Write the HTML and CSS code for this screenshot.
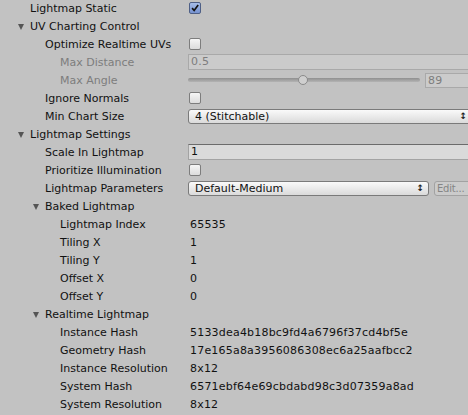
FILE: index.html
```html
<!DOCTYPE html>
<html>
<head>
<meta charset="utf-8">
<link rel="stylesheet" href="styles.css">
</head>
<body>
<div class="inspector">
  <div class="row"><div class="label l1">Lightmap Static</div><div class="value"><span class="check on"><svg viewBox="0 0 12 12" width="12" height="12"><path d="M2.5 6.2 L5 9 L9.8 2.3" fill="none" stroke="#111" stroke-width="2"/></svg></span></div></div>
  <div class="row"><div class="label l1 fold"><span class="tri"></span>UV Charting Control</div></div>
  <div class="row"><div class="label l2">Optimize Realtime UVs</div><div class="value"><span class="check"></span></div></div>
  <div class="row"><div class="label l3 dim">Max Distance</div><div class="value"><div class="field disabled">0.5</div></div></div>
  <div class="row"><div class="label l3 dim">Max Angle</div><div class="value slider-row"><div class="slider"><div class="track"></div><div class="thumb"></div></div><div class="field disabled num">89</div></div></div>
  <div class="row"><div class="label l2">Ignore Normals</div><div class="value"><span class="check"></span></div></div>
  <div class="row"><div class="label l2">Min Chart Size</div><div class="value"><div class="popup full">4 (Stitchable)<span class="arrows">&#8597;</span></div></div></div>
  <div class="row"><div class="label l1 fold"><span class="tri"></span>Lightmap Settings</div></div>
  <div class="row"><div class="label l2">Scale In Lightmap</div><div class="value"><div class="field">1</div></div></div>
  <div class="row"><div class="label l2">Prioritize Illumination</div><div class="value"><span class="check"></span></div></div>
  <div class="row"><div class="label l2">Lightmap Parameters</div><div class="value param-row"><div class="popup">Default-Medium<span class="arrows">&#8597;</span></div><div class="button disabled">Edit...</div></div></div>
  <div class="row"><div class="label l2 fold"><span class="tri"></span>Baked Lightmap</div></div>
  <div class="row"><div class="label l3">Lightmap Index</div><div class="value text">65535</div></div>
  <div class="row"><div class="label l3">Tiling X</div><div class="value text">1</div></div>
  <div class="row"><div class="label l3">Tiling Y</div><div class="value text">1</div></div>
  <div class="row"><div class="label l3">Offset X</div><div class="value text">0</div></div>
  <div class="row"><div class="label l3">Offset Y</div><div class="value text">0</div></div>
  <div class="row"><div class="label l2 fold"><span class="tri"></span>Realtime Lightmap</div></div>
  <div class="row"><div class="label l3">Instance Hash</div><div class="value text">5133dea4b18bc9fd4a6796f37cd4bf5e</div></div>
  <div class="row"><div class="label l3">Geometry Hash</div><div class="value text">17e165a8a3956086308ec6a25aafbcc2</div></div>
  <div class="row"><div class="label l3">Instance Resolution</div><div class="value text">8x12</div></div>
  <div class="row"><div class="label l3">System Hash</div><div class="value text">6571ebf64e69cbdabd98c3d07359a8ad</div></div>
  <div class="row"><div class="label l3">System Resolution</div><div class="value text">8x12</div></div>
</div>
</body>
</html>
```
FILE: styles.css
```css
html, body {
  margin: 0;
  padding: 0;
  background: #c2c2c2;
  overflow: hidden;
}
.inspector {
  width: 472px;
  display: flex;
  flex-direction: column;
  gap: 2px;
  font-family: "DejaVu Sans", Verdana, sans-serif;
  font-size: 11px;
  color: #111;
}
.row {
  height: 16px;
  display: flex;
  align-items: center;
}
.label {
  width: 188px;
  flex: none;
  box-sizing: border-box;
  white-space: nowrap;
  display: flex;
  align-items: center;
}
.l1 { padding-left: 30px; }
.l2 { padding-left: 45px; }
.l3 { padding-left: 60px; }
.dim { color: #7d7d7d; }
.fold { position: relative; }
.tri {
  position: absolute;
  width: 0;
  height: 0;
  border-left: 3.5px solid transparent;
  border-right: 3.5px solid transparent;
  border-top: 6px solid #555;
  margin-left: -12px;
  margin-top: 1px;
}
.value {
  flex: 1;
  display: flex;
  align-items: center;
  height: 16px;
  min-width: 0;
}
.value.text {
  padding-left: 2px;
  letter-spacing: 0.2px;
  white-space: nowrap;
}
.check {
  width: 12px;
  height: 12px;
  margin-left: 1px;
  box-sizing: border-box;
  border: 1px solid #7d7d7d;
  border-radius: 2px;
  background: linear-gradient(#f6f6f6, #dcdcdc);
  display: flex;
  align-items: center;
  justify-content: center;
}
.check svg { display: block; }
.check.on {
  border-color: #4e5f86;
  background: linear-gradient(#a6bde8, #7692cf);
}
.field {
  flex: 1;
  height: 16px;
  box-sizing: border-box;
  border: 1px solid #a3a3a3;
  border-top-color: #6b6b6b;
  background: #dadada;
  padding-left: 2px;
  line-height: 14px;
  letter-spacing: 0.2px;
}
.field.disabled {
  background: #cbcbcb;
  border-color: #a9a9a9;
  color: #7d7d7d;
}
.slider-row, .param-row { gap: 5px; }
.slider {
  flex: 1;
  position: relative;
  height: 16px;
}
.track {
  position: absolute;
  left: 0;
  right: 0;
  top: 6px;
  height: 4px;
  border-radius: 2px;
  background: linear-gradient(#8f8f8f, #b3b3b3);
}
.thumb {
  position: absolute;
  left: 110px;
  top: 3px;
  width: 10px;
  height: 10px;
  box-sizing: border-box;
  border-radius: 50%;
  border: 1px solid #8a8a8a;
  background: #cfcfcf;
}
.field.num {
  flex: none;
  width: 47px;
  height: 15px;
  line-height: 13px;
}
.popup {
  flex: 1;
  height: 15px;
  box-sizing: border-box;
  border: 1px solid #7a7a7a;
  border-radius: 3px;
  background: linear-gradient(#fafafa, #dadada);
  padding-left: 6px;
  line-height: 13px;
  position: relative;
}
.arrows {
  position: absolute;
  right: 4px;
  top: 0;
  font-size: 9px;
  font-weight: bold;
  color: #222;
}
.button {
  flex: none;
  width: 38px;
  height: 15px;
  box-sizing: border-box;
  border: 1px solid #a2a2a2;
  border-radius: 3px;
  background: #cbcbcb;
  padding-left: 2px;
  line-height: 13px;
  font-size: 10px;
  letter-spacing: -0.2px;
  white-space: nowrap;
  color: #858585;
}
```
